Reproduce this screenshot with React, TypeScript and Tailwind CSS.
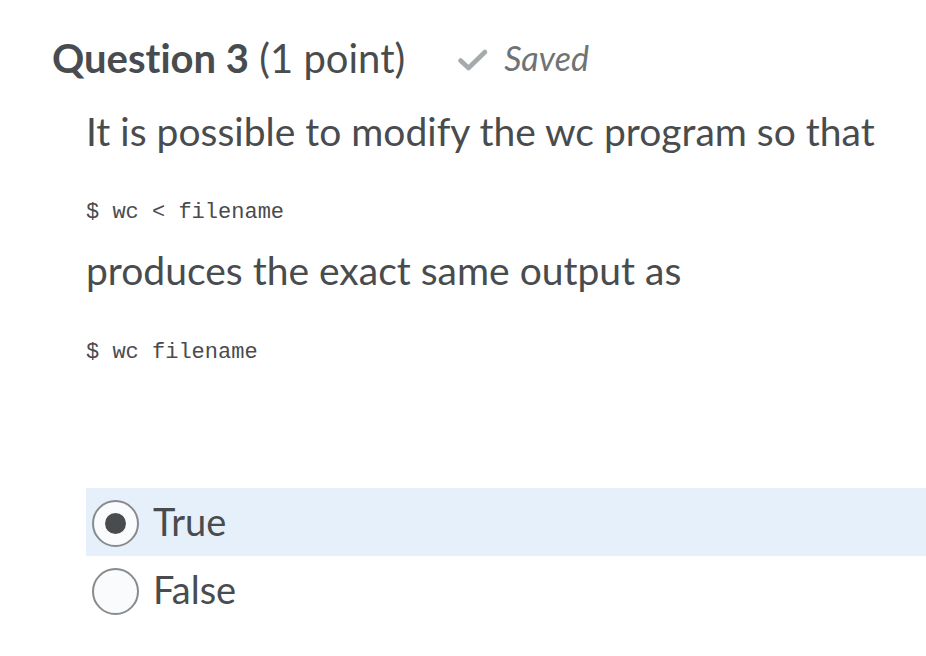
import React from "react";

const lato = { fontFamily: "Lato, 'Noto Sans', sans-serif" };
const mono = { fontFamily: "'Liberation Mono', 'DejaVu Sans Mono', monospace" };

export default function App() {
  return (
    <div className="w-[926px] h-[656px] bg-white text-[#494c4e] overflow-hidden [font-variant-ligatures:none]" style={lato}>
      <div className="pt-[34px] pl-[52px]">
        <div className="flex items-baseline h-[48px] leading-[48px] text-[40px]">
          <span className="whitespace-pre">
            <span className="font-bold">Question 3</span> (1 point)
          </span>
          <span className="ml-[52px] flex items-center self-center text-[#6e7376]">
            <svg width="32" height="24" viewBox="0 0 32 24" className="mr-[15px] translate-y-[2px]">
              <path d="M3.5 12.5 L11.5 20 L28 4" fill="none" stroke="#a5aaad" strokeWidth="4.6" strokeLinecap="round" strokeLinejoin="round" />
            </svg>
            <span className="text-[34px] italic leading-[48px]">Saved</span>
          </span>
        </div>
      </div>
      <div className="pl-[86px]">
        <p className="mt-[25px] text-[39px] leading-[48px]">It is possible to modify the wc program so that</p>
        <p className="mt-[45px] text-[22px] leading-[26px]" style={mono}>$ wc &lt; filename</p>
        <p className="mt-[20px] text-[39px] leading-[48px]">produces the exact same output as</p>
        <p className="mt-[46px] text-[22px] leading-[26px]" style={mono}>$ wc filename</p>
      </div>
      <div className="mt-[122px] ml-[86px] flex flex-col">
        <label className="flex items-center h-[68px] bg-[#e6f0fa] pl-[6px] pt-[3px]">
          <span className="w-[47px] h-[47px] rounded-full border-2 border-[#878b8e] bg-[#f9fbfd] flex items-center justify-center">
            <span className="w-[21px] h-[21px] rounded-full bg-[#494c4e]" />
          </span>
          <span className="ml-[14px] text-[38px] leading-[44px] -translate-y-[3px]">True</span>
        </label>
        <label className="flex items-center h-[68px] pl-[6px] pt-[3px]">
          <span className="w-[47px] h-[47px] rounded-full border-2 border-[#878b8e] bg-[#f9fbfd]" />
          <span className="ml-[14px] text-[38px] leading-[44px] -translate-y-[3px]">False</span>
        </label>
      </div>
    </div>
  );
}
